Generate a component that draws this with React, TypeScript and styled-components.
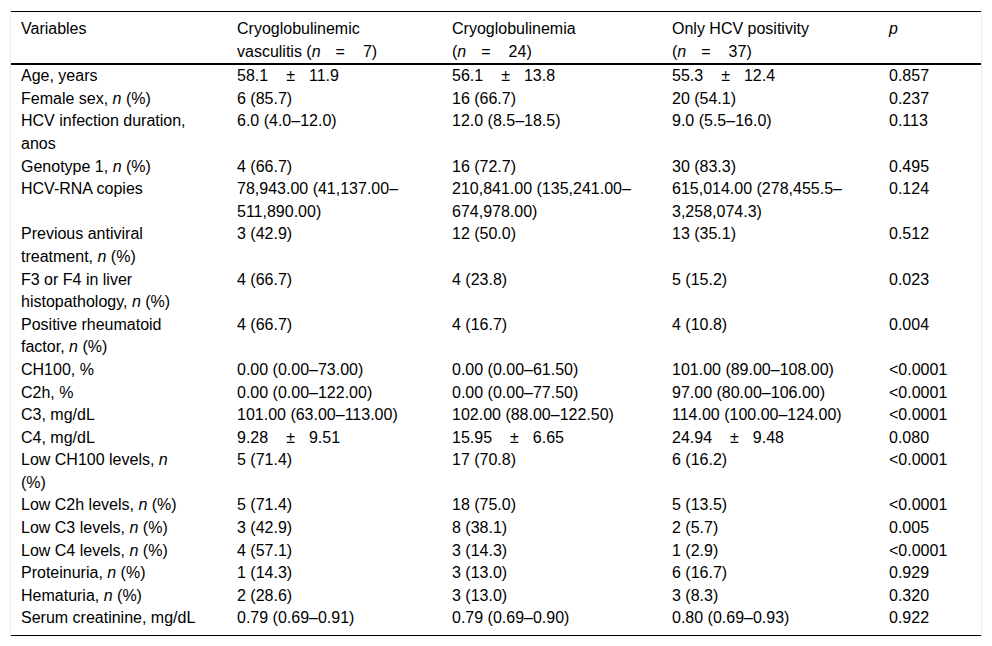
import React from "react";
import styled, { createGlobalStyle } from "styled-components";

const Global = createGlobalStyle`
  html, body { margin: 0; padding: 0; background: #ffffff; }
  body {
    font-family: "Liberation Sans", Arial, Helvetica, sans-serif;
    color: #000000;
  }
`;

const Frame = styled.div`
  margin: 9px 0 0 10px;
  width: 970px;
  padding-top: 2px;
  border-left: 1px solid #ececec;
  border-right: 1px solid #ececec;
`;

const Table = styled.table`
  width: 970px;
  table-layout: fixed;
  border-collapse: separate;
  border-spacing: 0;
  border-top: 1px solid #000;
  border-bottom: 1px solid #000;
  font-size: 16px;
  line-height: 22.6px;
`;

const HeadCell = styled.th`
  text-align: left;
  font-weight: normal;
  vertical-align: top;
  padding: 6px 31px 0 10px;
  border-bottom: 2px solid #000;
`;

const Cell = styled.td<{ $last?: boolean }>`
  vertical-align: top;
  padding: 0 31px ${(p) => (p.$last ? "5px" : "0")} 10px;
`;

const I = styled.i`
  font-style: italic;
`;

const NoWrap = styled.span`
  white-space: nowrap;
`;

const Pm = styled.span`
  margin: 0 14px 0 18px;
`;

const Eq = styled.span`
  margin: 0 18px 0 15px;
`;

const widths = [216, 215, 220, 217, 102];

const pm = (a: string, b: string) => (
  <NoWrap>
    {a}
    <Pm>±</Pm>
    {b}
  </NoWrap>
);

const nPct = (s: string) => (
  <>
    {s}, <I>n</I> (%)
  </>
);

type Row = { label: React.ReactNode; v: React.ReactNode[] };

const rows: Row[] = [
  { label: "Age, years", v: [pm("58.1", "11.9"), pm("56.1", "13.8"), pm("55.3", "12.4"), "0.857"] },
  { label: nPct("Female sex"), v: ["6 (85.7)", "16 (66.7)", "20 (54.1)", "0.237"] },
  { label: "HCV infection duration, anos", v: ["6.0 (4.0–12.0)", "12.0 (8.5–18.5)", "9.0 (5.5–16.0)", "0.113"] },
  { label: nPct("Genotype 1"), v: ["4 (66.7)", "16 (72.7)", "30 (83.3)", "0.495"] },
  {
    label: "HCV-RNA copies",
    v: [
      "78,943.00 (41,137.00–511,890.00)",
      "210,841.00 (135,241.00–674,978.00)",
      "615,014.00 (278,455.5–3,258,074.3)",
      "0.124",
    ],
  },
  { label: nPct("Previous antiviral treatment"), v: ["3 (42.9)", "12 (50.0)", "13 (35.1)", "0.512"] },
  { label: nPct("F3 or F4 in liver histopathology"), v: ["4 (66.7)", "4 (23.8)", "5 (15.2)", "0.023"] },
  { label: nPct("Positive rheumatoid factor"), v: ["4 (66.7)", "4 (16.7)", "4 (10.8)", "0.004"] },
  { label: "CH100, %", v: ["0.00 (0.00–73.00)", "0.00 (0.00–61.50)", "101.00 (89.00–108.00)", "<0.0001"] },
  { label: "C2h, %", v: ["0.00 (0.00–122.00)", "0.00 (0.00–77.50)", "97.00 (80.00–106.00)", "<0.0001"] },
  { label: "C3, mg/dL", v: ["101.00 (63.00–113.00)", "102.00 (88.00–122.50)", "114.00 (100.00–124.00)", "<0.0001"] },
  { label: "C4, mg/dL", v: [pm("9.28", "9.51"), pm("15.95", "6.65"), pm("24.94", "9.48"), "0.080"] },
  { label: nPct("Low CH100 levels"), v: ["5 (71.4)", "17 (70.8)", "6 (16.2)", "<0.0001"] },
  { label: nPct("Low C2h levels"), v: ["5 (71.4)", "18 (75.0)", "5 (13.5)", "<0.0001"] },
  { label: nPct("Low C3 levels"), v: ["3 (42.9)", "8 (38.1)", "2 (5.7)", "0.005"] },
  { label: nPct("Low C4 levels"), v: ["4 (57.1)", "3 (14.3)", "1 (2.9)", "<0.0001"] },
  { label: nPct("Proteinuria"), v: ["1 (14.3)", "3 (13.0)", "6 (16.7)", "0.929"] },
  { label: nPct("Hematuria"), v: ["2 (28.6)", "3 (13.0)", "3 (8.3)", "0.320"] },
  { label: "Serum creatinine, mg/dL", v: ["0.79 (0.69–0.91)", "0.79 (0.69–0.90)", "0.80 (0.69–0.93)", "0.922"] },
];

const group = (name: string, n: string) => (
  <>
    {name}{" "}
    <NoWrap>
      (<I>n</I>
      <Eq>=</Eq>
      {n})
    </NoWrap>
  </>
);

export default function App() {
  return (
    <>
      <Global />
      <Frame>
        <Table>
          <colgroup>
            {widths.map((w, i) => (
              <col key={i} style={{ width: w }} />
            ))}
          </colgroup>
          <thead>
            <tr>
              <HeadCell>Variables</HeadCell>
              <HeadCell>{group("Cryoglobulinemic vasculitis", "7")}</HeadCell>
              <HeadCell>{group("Cryoglobulinemia", "24")}</HeadCell>
              <HeadCell>{group("Only HCV positivity", "37")}</HeadCell>
              <HeadCell>
                <I>p</I>
              </HeadCell>
            </tr>
          </thead>
          <tbody>
            {rows.map((r, i) => {
              const last = i === rows.length - 1;
              return (
                <tr key={i}>
                  <Cell $last={last}>{r.label}</Cell>
                  {r.v.map((c, j) => (
                    <Cell key={j} $last={last}>
                      {c}
                    </Cell>
                  ))}
                </tr>
              );
            })}
          </tbody>
        </Table>
      </Frame>
    </>
  );
}
